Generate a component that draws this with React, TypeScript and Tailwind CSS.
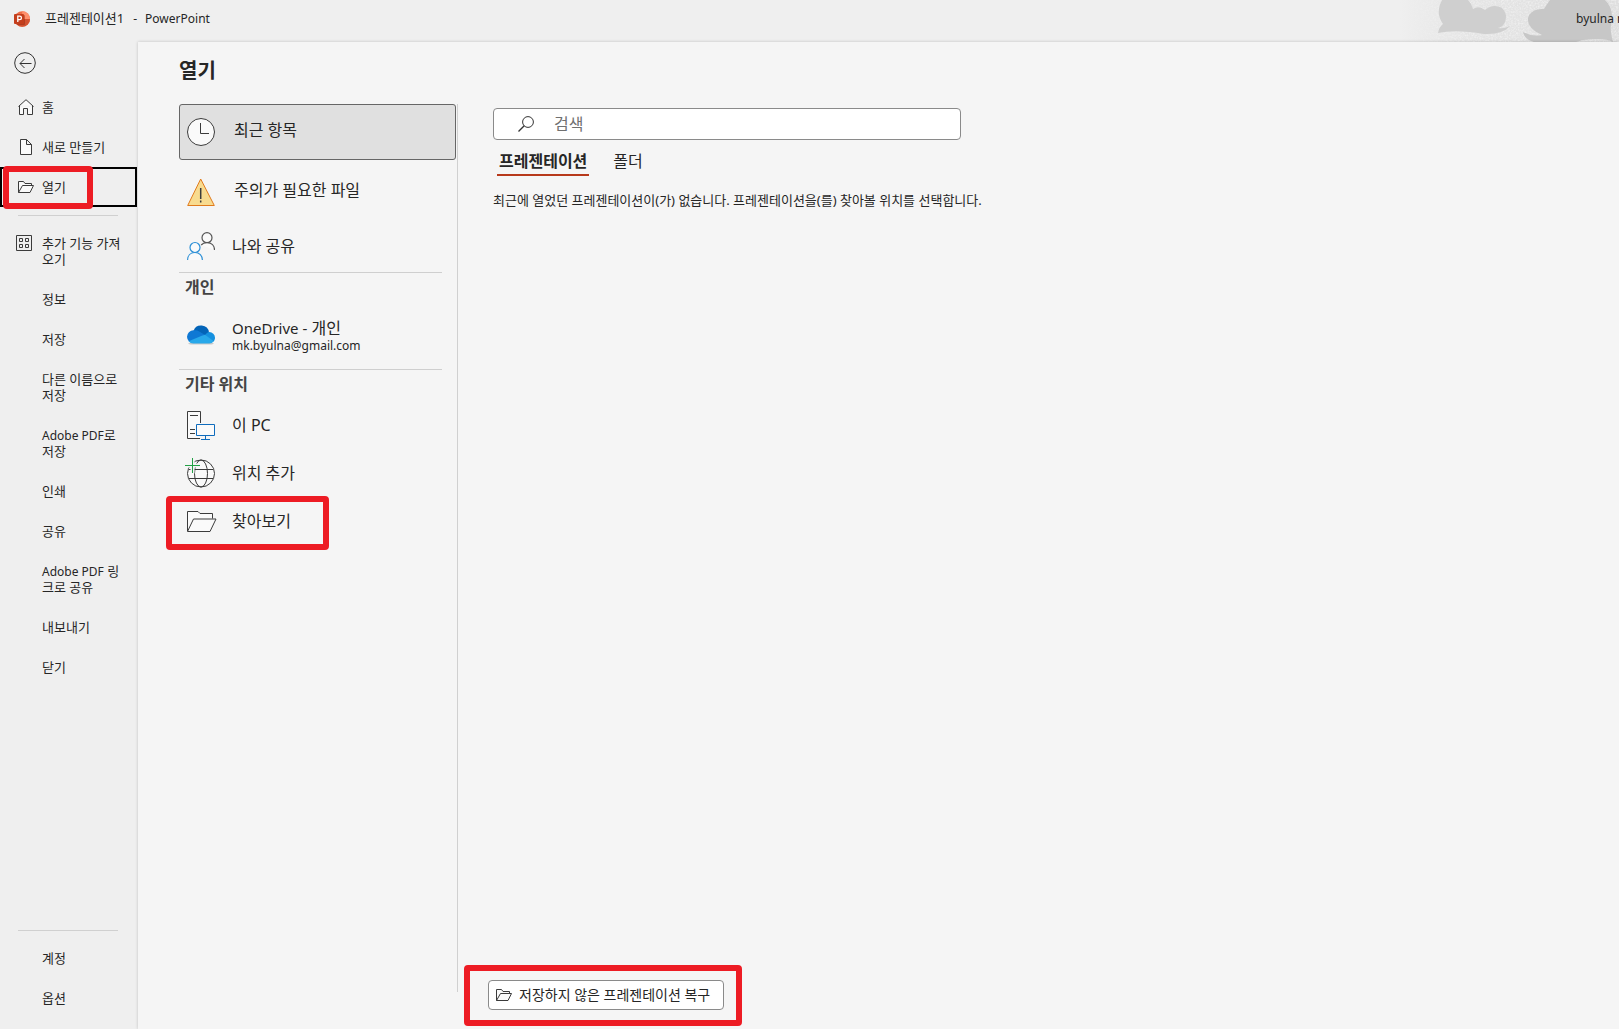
import type { ReactNode } from 'react';

type NavItem = {
  label: ReactNode;
  icon?: ReactNode;
};

type PlaceProps = {
  icon: ReactNode;
  children: ReactNode;
  className?: string;
};

const HomeIcon = () => (
  <svg width="16" height="16" viewBox="0 0 16 16" fill="#fafafa" stroke="#3b3b3b">
    <path d="M.5 7.500 8 .7l7.500 6.800M1.500 6.700v8.800h4v-6h4v6h5V6.700" />
  </svg>
);

const FileIcon = () => (
  <svg width="16" height="16" viewBox="0 0 16 16" fill="#fafafa" stroke="#3b3b3b">
    <path d="M2.500.5h6l5 5v10h-11zM8.500.5v5h5" />
  </svg>
);

const FolderIcon = () => (
  <svg width="16" height="16" viewBox="0 0 16 16" fill="#fafafa" stroke="#3b3b3b">
    <path d="M.5 13.500v-11h5l1.500 2h6.500v2M.5 13.500l4-7h11l-3.500 7z" />
  </svg>
);

const AddinsIcon = () => (
  <svg width="16" height="16" viewBox="0 0 16 16" fill="none" stroke="#3b3b3b">
    <path d="M.5.5h15v15H.5zM3.500 3.500h3v3h-3zM9.500 3.500h3v3h-3zM3.500 9.500h3v3h-3zM9.500 9.500h3v3h-3z" />
  </svg>
);

const PowerPointIcon = () => (
  <svg width="16" height="16" viewBox="0 0 16 16">
    <circle cx="8.200" cy="8" r="7.800" fill="#ed6c47" />
    <path d="M8.200.2A7.800 7.800 0 0 1 16 8H8.200z" fill="#ff8f6b" />
    <path d="M.4 8H16a7.800 7.800 0 0 1-15.600 0z" fill="#d35230" />
    <rect x="3" y="4" width="8" height="10" rx="1" fill="#8f2a12" opacity=".5" />
    <rect x="0" y="3" width="10" height="10" rx="1" fill="#c43e1c" />
    <path d="M3.800 11V5.200h1.900a1.700 1.700 0 0 1 0 3.500H3.800" fill="none" stroke="#fff" strokeWidth="1.300" />
  </svg>
);

const ClockIcon = () => (
  <svg width="28" height="28" viewBox="0 0 28 28" fill="#fafafa" stroke="#3b3b3b">
    <circle cx="14" cy="14" r="13.500" />
    <path d="M13.500 5v10.500h8.500" fill="none" />
  </svg>
);

const WarningIcon = () => (
  <svg width="28" height="28" viewBox="0 0 28 28">
    <path d="M13.700 1 27.300 27.500H.7z" fill="#f8db8f" stroke="#e07a1c" />
    <path d="M13.700 10v11M13.700 22.500v2" stroke="#3b3b3b" strokeWidth="1.500" />
  </svg>
);

const PeopleIcon = () => (
  <svg width="28" height="28" viewBox="0 0 28 28" fill="#fafafa">
    <g stroke="#555" strokeWidth="1.200">
      <circle cx="20" cy="5.700" r="5" />
      <path d="M14.200 13c1.300-1.600 3.400-2.300 5.800-2.300 4.500 0 7.500 3 7.500 7.300" />
    </g>
    <g stroke="#2b8fd6" strokeWidth="1.200">
      <circle cx="8" cy="15.500" r="5" />
      <path d="M.6 28c0-4.500 3-7.500 7.400-7.500s7.400 3 7.400 7.500" />
    </g>
  </svg>
);

const OneDriveIcon = () => (
  <svg width="28" height="20" viewBox="0 0 28 20">
    <path d="M4 19.600h20a4 4 0 0 0 3-1.600H1a4 4 0 0 0 3 1.600z" fill="#c9c9c9" />
    <path d="M6.500 6A8 8 0 0 1 22 7.500l-4.500 6z" fill="#0364b8" />
    <path d="M6.500 5.300c2-.4 4 0 5.700 1.100l6 3.600-6 6L2 16.500A6.500 6.500 0 0 1 0 11.800a6.600 6.600 0 0 1 6.500-6.500z" fill="#0f78d4" />
    <path d="M18 10c1.500-2 3-3 4.300-3A5.800 5.800 0 0 1 28 12.700c0 1.400-.5 2.700-1.400 3.700L17 13z" fill="#1490df" />
    <path d="m1.600 16.200 13.200-5.400 3.200-1 8.800 6.400a5.600 5.600 0 0 1-4.500 2.400H6.200a6.300 6.300 0 0 1-4.600-2.400z" fill="#28a8ea" />
  </svg>
);

const ComputerIcon = () => (
  <svg width="28" height="29" viewBox="0 0 28 29" fill="#fafafa">
    <path d="M13.500 12V.5H.5v27H13" stroke="#3b3b3b" />
    <path d="M3 4.500h8M3 18.500h5M3 22.500h5" stroke="#3b3b3b" />
    <path d="M9.500 13.500h18v11h-18zM18.500 24.500v4M14 28.500h9" stroke="#0f6cbd" />
  </svg>
);

const AddPlaceIcon = () => (
  <svg width="30" height="30" viewBox="0 0 30 30" fill="none" stroke="#3b3b3b">
    <circle cx="16" cy="15.500" r="13.500" fill="#fafafa" />
    <ellipse cx="16" cy="15.500" rx="6.500" ry="13.500" />
    <path d="M4 11.500h24M4 20.500h24" />
    <path d="M7.500 0v15M0 7.500h15" stroke="#f5f5f5" strokeWidth="4" />
    <path d="M7.500 0v15M0 7.500h15" stroke="#22a045" />
  </svg>
);

const BrowseIcon = () => (
  <svg width="30" height="21" viewBox="0 0 30 21" fill="#fafafa" stroke="#3b3b3b">
    <path d="M.5 20V.5H11l2 2h12.500v5M.5 20.500l6-12.500h22.500l-6 12.500z" />
  </svg>
);

const SearchIcon = () => (
  <svg width="16" height="16" viewBox="0 0 16 16" fill="none" stroke="#333">
    <circle cx="10" cy="6" r="5.400" />
    <path d="M6.200 9.800.5 15.500" strokeWidth="1.300" />
  </svg>
);

const TitleArt = () => (
  <svg className="absolute right-0 top-0" width="219" height="42" viewBox="0 0 219 42">
    <defs>
      <linearGradient id="haze">
        <stop offset="0" stopColor="#efefef" />
        <stop offset=".3" stopColor="#e5e5e5" />
        <stop offset="1" stopColor="#dedede" />
      </linearGradient>
      <linearGradient id="fade">
        <stop offset="0" stopColor="#fff" stopOpacity="0" />
        <stop offset=".3" stopColor="#fff" stopOpacity=".6" />
      </linearGradient>
      <mask id="grainMask">
        <path d="M0 0h219v42H0z" fill="url(#fade)" />
      </mask>
      <filter id="grain">
        <feTurbulence type="fractalNoise" baseFrequency=".6" numOctaves="2" />
        <feColorMatrix values="0 0 0 0 1  0 0 0 0 1  0 0 0 0 1  1.600 0 0 0 -.6" />
      </filter>
    </defs>
    <path d="M0 0h219v42H0z" fill="url(#haze)" />
    <g mask="url(#grainMask)">
      <path d="M0 0h219v42H0z" filter="url(#grain)" />
    </g>
    <path
      d="M42 0h26q4 4 5 9 6-4 12 1 8-7 17-2 6 6 3 14-2 5-7 6 6 1 12-2-8 9-26 8-28-5-46-1 1-6 5-9-8-11-1-24z"
      fill="#cfcfcf"
    />
    <path
      d="M150 0h55q8 7 7 21-3 6 1 21-8-5-30-2l-7 2h-42q-10-3-11-10 9 5 19 3-18-8-13-20 5-7 15-6 3-5 6-9z"
      fill="#c7c7c7"
    />
  </svg>
);

// Red marker frame drawn over the element it wraps
const Marker = ({ className }: { className: string }) => (
  <span className={`pointer-events-none absolute rounded-sm border-6 border-[#ed1c24] ${className}`} />
);

const navItems: NavItem[] = [
  { label: '추가 기능 가져오기', icon: <AddinsIcon /> },
  { label: '정보' },
  { label: '저장' },
  { label: '다른 이름으로 저장' },
  { label: <><span className="text-xs leading-none">Adobe PDF</span>로 저장</> },
  { label: '인쇄' },
  { label: '공유' },
  { label: <><span className="text-xs leading-none">Adobe PDF</span> 링크로 공유</> },
  { label: '내보내기' },
  { label: '닫기' },
];

const NavButton = ({ label, icon }: NavItem) => (
  <button type="button" className="flex w-full items-start py-3 pl-4 text-left">
    <span className="w-[26px] shrink-0">{icon}</span>
    <span className="w-[84px] leading-4">{label}</span>
  </button>
);

const NavDivider = () => <hr className="mb-[7px] ml-[18px] mr-[19px] mt-2 h-0 border-t border-[#d0d0d0]" />;

const Place = ({ icon, children, className = '' }: PlaceProps) => (
  <button type="button" className={`flex w-full items-center pl-2 text-left ${className}`}>
    <span className="flex w-[45px] shrink-0">{icon}</span>
    <span>{children}</span>
  </button>
);

const Sidebar = () => (
  <nav className="flex w-[137px] shrink-0 flex-col pb-[11px] text-[13px] leading-4">
    <button type="button" aria-label="뒤로" className="mb-[13px] ml-3.5 mt-2.5 self-start">
      <svg width="22" height="22" viewBox="0 0 22 22" fill="none" stroke="#333">
        <circle cx="11" cy="11" r="10.300" />
        <path d="M17.500 11.500H6M10.500 7 6 11.500l4.500 4.500" />
      </svg>
    </button>
    <NavButton label="홈" icon={<span className="ml-0.5 block"><HomeIcon /></span>} />
    <NavButton label="새로 만들기" icon={<span className="ml-0.5 block"><FileIcon /></span>} />
    <div className="relative outline-2 -outline-offset-2 outline-black">
      <NavButton label="열기" icon={<span className="ml-0.5 block"><FolderIcon /></span>} />
      <Marker className="-top-px left-[3px] h-[43px] w-[90px]" />
    </div>
    <NavDivider />
    {navItems.map((item, i) => (
      <NavButton key={i} {...item} />
    ))}
    <div className="grow" />
    <NavDivider />
    <NavButton label="계정" />
    <NavButton label="옵션" />
  </nav>
);

const Places = () => (
  <div className="mb-[37px] flex w-[279px] shrink-0 flex-col border-r border-[#d0d0d0] pr-px text-base">
    <Place icon={<ClockIcon />} className="h-14 rounded-[3px] bg-[#e0e0e0] outline outline-1 -outline-offset-1 outline-[#666]">
      <span className="ml-0.5 block pb-1">최근 항목</span>
    </Place>
    <Place icon={<WarningIcon />} className="h-16">
      <span className="ml-0.5 block pb-1">주의가 필요한 파일</span>
    </Place>
    <Place icon={<PeopleIcon />} className="h-12 pb-1">
      나와 공유
    </Place>
    <hr className="mr-3.5 border-t border-[#cfcfcf]" />
    <h2 className="h-7 pl-1.5 font-bold leading-7 text-[#444]">개인</h2>
    <Place icon={<OneDriveIcon />} className="h-[68px]">
      <span className="block pt-0.5 leading-5">
        <span className="text-[15px] leading-none">OneDrive -</span> 개인
      </span>
      <span className="block text-xs">mk.byulna@gmail.com</span>
    </Place>
    <hr className="mr-3.5 border-t border-[#cfcfcf]" />
    <h2 className="mb-[3px] h-7 pl-1.5 font-bold leading-7 text-[#444]">기타 위치</h2>
    <Place icon={<ComputerIcon />} className="h-12">
      이 PC
    </Place>
    <Place icon={<span className="-ml-0.5 block"><AddPlaceIcon /></span>} className="h-12">
      위치 추가
    </Place>
    <div className="relative">
      <Place icon={<BrowseIcon />} className="h-12">
        찾아보기
      </Place>
      <Marker className="-left-[13px] -top-px h-[54px] w-[163px]" />
    </div>
  </div>
);

const Recent = () => (
  <section className="flex min-w-0 grow flex-col pb-[19px] pl-[35px] pt-1">
    <label className="flex h-8 w-[468px] items-center rounded-sm border border-[#8a8a8a] bg-white pl-6">
      <SearchIcon />
      <input
        type="text"
        aria-label="검색"
        placeholder="검색"
        className="ml-5 min-w-0 grow bg-transparent text-base outline-none placeholder:text-[#707070]"
      />
    </label>
    <div className="mt-2 flex gap-6 pl-1 text-base leading-[26px]">
      <button type="button" className="border-b-2 border-[#b7391b] px-0.5 font-bold">
        프레젠테이션
      </button>
      <button type="button" className="border-b-2 border-transparent">
        폴더
      </button>
    </div>
    <p className="mt-3.5 text-[13px] leading-5">
      최근에 열었던 프레젠테이션이(가) 없습니다. 프레젠테이션을(를) 찾아볼 위치를 선택합니다.
    </p>
    <div className="grow" />
    <div className="relative -ml-[5px] self-start">
      <button type="button" className="flex h-[30px] w-[236px] items-center gap-[7px] whitespace-nowrap rounded-sm border border-[#8a8a8a] bg-white pl-[7px] text-sm">
        <FolderIcon />
        저장하지 않은 프레젠테이션 복구
      </button>
      <Marker className="-left-6 -top-[15px] h-[61px] w-[278px]" />
    </div>
  </section>
);

const App = () => (
  <div className="flex min-h-screen flex-col overflow-hidden bg-[#efefef] font-['Noto_Sans','Noto_Sans_CJK_KR',sans-serif] text-[#262626]">
    <header className="relative flex h-[42px] items-center justify-between overflow-hidden pb-1 pl-3.5 text-xs">
      <TitleArt />
      <div className="flex items-center">
        <PowerPointIcon />
        <span className="ml-[15px] text-[13px]">프레젠테이션1</span>
        <span className="ml-[9px] mr-2">-</span>
        <span>PowerPoint</span>
      </div>
      <span className="relative w-[43px] whitespace-nowrap">byulna m</span>
    </header>
    <div className="flex grow">
      <Sidebar />
      <main className="relative ml-px flex grow flex-col bg-[#f5f5f5] pl-[41px] shadow-[0_0_3px_rgba(0,0,0,0.2)]">
        <h1 className="pb-[15px] pt-[11px] text-xl font-bold leading-9">열기</h1>
        <div className="flex grow">
          <Places />
          <Recent />
        </div>
      </main>
    </div>
  </div>
);

export default App;
